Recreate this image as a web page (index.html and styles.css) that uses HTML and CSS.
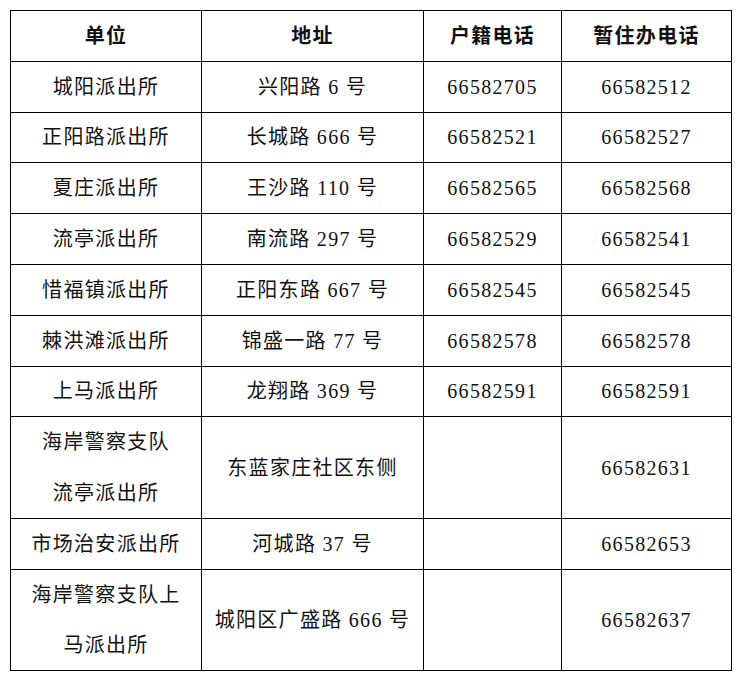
FILE: index.html
```html
<!DOCTYPE html>
<html lang="zh">
<head>
<meta charset="utf-8">
<link rel="stylesheet" href="styles.css">
</head>
<body>
<table class="tbl">
  <colgroup>
    <col class="c1"><col class="c2"><col class="c3"><col class="c4">
  </colgroup>
  <thead>
    <tr><th>单位</th><th>地址</th><th>户籍电话</th><th>暂住办电话</th></tr>
  </thead>
  <tbody>
    <tr><td>城阳派出所</td><td>兴阳路 6 号</td><td>66582705</td><td>66582512</td></tr>
    <tr><td>正阳路派出所</td><td>长城路 666 号</td><td>66582521</td><td>66582527</td></tr>
    <tr><td>夏庄派出所</td><td>王沙路 110 号</td><td>66582565</td><td>66582568</td></tr>
    <tr><td>流亭派出所</td><td>南流路 297 号</td><td>66582529</td><td>66582541</td></tr>
    <tr><td>惜福镇派出所</td><td>正阳东路 667 号</td><td>66582545</td><td>66582545</td></tr>
    <tr><td>棘洪滩派出所</td><td>锦盛一路 77 号</td><td>66582578</td><td>66582578</td></tr>
    <tr><td>上马派出所</td><td>龙翔路 369 号</td><td>66582591</td><td>66582591</td></tr>
    <tr><td class="two">海岸警察支队<br>流亭派出所</td><td>东蓝家庄社区东侧</td><td></td><td>66582631</td></tr>
    <tr><td>市场治安派出所</td><td>河城路 37 号</td><td></td><td>66582653</td></tr>
    <tr><td class="two">海岸警察支队上<br>马派出所</td><td>城阳区广盛路 666 号</td><td></td><td>66582637</td></tr>
  </tbody>
</table>
</body>
</html>
```
FILE: styles.css
```css
html, body {
  margin: 0;
  padding: 0;
  background: #fff;
}
.tbl {
  margin: 10px 0 0 10px;
  border-collapse: collapse;
  table-layout: fixed;
  width: 721px;
  font-family: "Liberation Serif", "Noto Sans CJK SC", serif;
  font-size: 20px;
  letter-spacing: 1.3px;
  color: #111;
}
.c1 { width: 191px; }
.c2 { width: 222px; }
.c3 { width: 138px; }
.c4 { width: 170px; }
.tbl th, .tbl td {
  border: 1px solid #000;
  padding: 0;
  text-align: center;
  vertical-align: middle;
  line-height: 24px;
  height: 49.8px;
  white-space: nowrap;
}
.tbl td.two {
  line-height: 50.3px;
}
.tbl th {
  font-weight: bold;
}
```
